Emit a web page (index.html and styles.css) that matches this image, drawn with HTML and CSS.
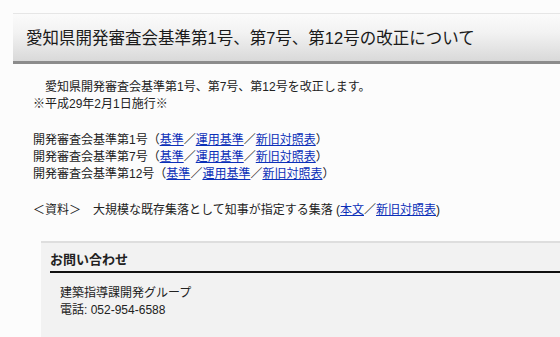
FILE: index.html
```html
<!DOCTYPE html>
<html lang="ja">

<head>
    <meta charset="UTF-8">
    <title>愛知県開発審査会基準の改正</title>
    <link rel="stylesheet" href="styles.css">
</head>

<body>
    <div class="page">
        <h1 class="page_title">愛知県開発審査会基準第1号、第7号、第12号の改正について</h1>

        <div class="main_text">
            <p>　愛知県開発審査会基準第1号、第7号、第12号を改正します。<br>※平成29年2月1日施行※</p>

            <p>開発審査会基準第1号（<a href="#">基準</a>／<a href="#">運用基準</a>／<a href="#">新旧対照表</a>）<br>
                開発審査会基準第7号（<a href="#">基準</a>／<a href="#">運用基準</a>／<a href="#">新旧対照表</a>）<br>
                開発審査会基準第12号（<a href="#">基準</a>／<a href="#">運用基準</a>／<a href="#">新旧対照表</a>）</p>

            <p>＜資料＞　大規模な既存集落として知事が指定する集落 (<a href="#">本文</a>／<a href="#">新旧対照表</a>)</p>
        </div>

        <div class="contact">
            <h2 class="contact_title">お問い合わせ</h2>
            <p class="contact_body">建築指導課開発グループ<br>電話: 052-954-6588</p>
        </div>
    </div>
</body>

</html>
```

FILE: styles.css
```css
* {
    margin: 0px;
    padding: 0px;
    box-sizing: border-box;
}

body {
    background: #fcfcfc;
    font-family: "Liberation Sans", "Noto Sans CJK JP", sans-serif;
    color: #222222;
    font-size: 12px;
}

.page {
    padding: 13px 0 0 13px;
}

.page_title {
    height: 51px;
    border-top: 1px solid #e6e6e6;
    border-bottom: 3px solid #8c8c8c;
    background: linear-gradient(#fbfbfb, #f2f2f2 40%, #d9d9d9);
    padding-left: 13px;
    padding-top: 12px;
    font-size: 16.5px;
    font-weight: normal;
    color: #1a1a1a;
    line-height: 24px;
}

.main_text {
    padding: 15px 0 0 20px;
    line-height: 17px;
}

.main_text p {
    margin-bottom: 19px;
}

.main_text a {
    color: #0b2fb8;
    text-decoration: underline;
}

.contact {
    margin: 22px 0 0 28px;
    border-top: 2px solid #dedede;
    background: #f2f2f2;
    padding: 8px 0 20px 9px;
}

.contact_title {
    font-size: 13px;
    font-weight: bold;
    line-height: 18px;
    padding-bottom: 2px;
    border-bottom: 2px solid #111111;
}

.contact_body {
    padding: 12px 0 0 10px;
    line-height: 17px;
}
```
